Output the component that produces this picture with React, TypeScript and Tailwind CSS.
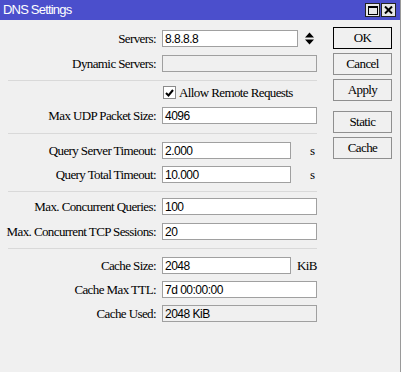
const SERIF = "font-['Liberation_Serif',serif] text-[13px] tracking-[-0.6px]";
const SANS = "font-['Liberation_Sans',sans-serif] text-[12px] tracking-[-0.5px]";

type RowProps = {
  label: string;
  value?: string;
  w?: string;
  unit?: string;
  disabled?: boolean;
  className?: string;
  children?: React.ReactNode;
};

const Row = ({ label, value, w = "w-[155px]", unit, disabled, className = "", children }: RowProps) => (
  <div className={`flex h-[17px] items-center ${className}`}>
    <div className={`w-[156px] text-right text-black ${SERIF}`}>{label}</div>
    <div
      className={`ml-[6px] flex h-[17px] items-center border border-[#a0a0a0] px-[2px] text-black ${SANS} ${w} ${
        disabled ? "bg-[#f0f0f0]" : "bg-white"
      }`}
    >
      {value}
    </div>
    {unit && <div className={`text-black ${SERIF} ${unit === "s" ? "ml-[19px]" : "ml-[6px]"}`}>{unit}</div>}
    {children}
  </div>
);

const Sep = ({ className = "" }: { className?: string }) => (
  <div className={`ml-[8px] h-px w-[309px] bg-[#d9d9d9] ${className}`} />
);

const Btn = ({ label, primary, className = "" }: { label: string; primary?: boolean; className?: string }) => (
  <button
    className={`flex h-[22px] w-[59px] items-center justify-center bg-[#f0f0f0] text-black ${SERIF} ${
      primary ? "border border-black" : "border border-[#8f8f8f]"
    } ${className}`}
  >
    {label}
  </button>
);

export default function App() {
  return (
    <div className="flex h-[372px] w-[401px] flex-col overflow-hidden border-r border-[#9a9a9a] bg-[#f0f0f0]">
      {/* title bar */}
      <div className="flex h-[20px] items-center justify-between bg-[#4b4fcc] pl-[3px] pr-[4px]">
        <span className="font-['Liberation_Sans',sans-serif] text-[13px] tracking-[-0.8px] text-white">DNS Settings</span>
        <div className="flex gap-px">
          <div className="flex h-[14px] w-[15px] items-center justify-center border border-[#222] bg-[#e6e6e6]">
            <div className="h-[9px] w-[10px] border border-black border-t-2" />
          </div>
          <div className="flex h-[14px] w-[15px] items-center justify-center border border-[#222] bg-[#e6e6e6]">
            <svg width="9" height="8" viewBox="0 0 9 8">
              <path d="M1 0.5 L8 7.5 M8 0.5 L1 7.5" stroke="black" strokeWidth="2" />
            </svg>
          </div>
        </div>
      </div>

      <div className="flex">
        {/* fields */}
        <div className="flex w-[320px] flex-col pt-[10px]">
          <Row label="Servers:" value="8.8.8.8" w="w-[136px]">
            <svg className="ml-[7px]" width="9" height="13" viewBox="0 0 9 13">
              <path d="M0 5.5 L4.5 0.5 L9 5.5 Z M0 7.5 L4.5 12.5 L9 7.5 Z" fill="black" />
            </svg>
          </Row>
          <Row label="Dynamic Servers:" disabled className="mt-[8px]" />
          <Sep className="mt-[8px]" />
          <div className="mt-[3px] flex h-[17px] items-center pl-[163px]">
            <div className="flex h-[13px] w-[13px] items-center justify-center border border-[#8a8a8a] bg-white">
              <svg width="9" height="8" viewBox="0 0 9 8">
                <path d="M1 4 L3.5 6.5 L8 1" stroke="black" strokeWidth="2" fill="none" />
              </svg>
            </div>
            <span className={`ml-[3px] text-black ${SERIF}`}>Allow Remote Requests</span>
          </div>
          <Row label="Max UDP Packet Size:" value="4096" className="mt-[6px]" />
          <Sep className="mt-[9px]" />
          <Row label="Query Server Timeout:" value="2.000" w="w-[129px]" unit="s" className="mt-[8px]" />
          <Row label="Query Total Timeout:" value="10.000" w="w-[129px]" unit="s" className="mt-[7px]" />
          <Sep className="mt-[8px]" />
          <Row label="Max. Concurrent Queries:" value="100" className="mt-[6px]" />
          <Row label="Max. Concurrent TCP Sessions:" value="20" className="mt-[8px]" />
          <Sep className="mt-[8px]" />
          <Row label="Cache Size:" value="2048" w="w-[129px]" unit="KiB" className="mt-[8px]" />
          <Row label="Cache Max TTL:" value="7d 00:00:00" className="mt-[7px]" />
          <Row label="Cache Used:" value="2048 KiB" disabled className="mt-[7px]" />
        </div>

        {/* buttons */}
        <div className="ml-[13px] flex flex-col pt-[7px]">
          <Btn label="OK" primary />
          <Btn label="Cancel" className="mt-[4px]" />
          <Btn label="Apply" className="mt-[4px]" />
          <Btn label="Static" className="mt-[10px]" />
          <Btn label="Cache" className="mt-[4px]" />
        </div>
      </div>
    </div>
  );
}
